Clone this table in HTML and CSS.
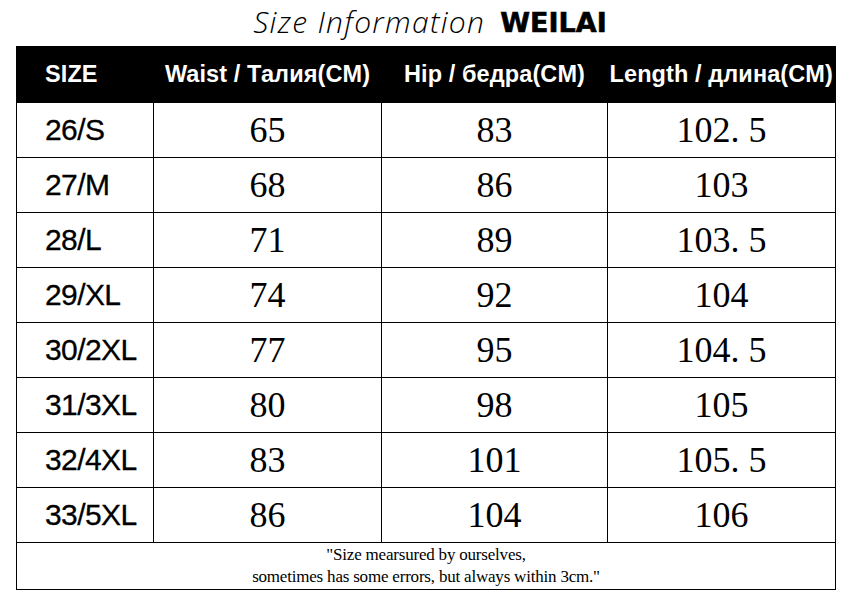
FILE: index.html
```html
<!DOCTYPE html>
<html lang="en">
<head>
<meta charset="utf-8">
<title>Size Information WEILAI</title>
<link rel="stylesheet" href="styles.css">
</head>
<body>
<div class="page">
  <h1 class="title"><span class="title-script">Size Information</span><span class="title-brand">WEILAI</span></h1>
  <table class="size-table">
    <colgroup>
      <col class="c-size"><col class="c-num"><col class="c-num2"><col class="c-num">
    </colgroup>
    <thead>
      <tr class="head-row">
        <th class="h-size">SIZE</th>
        <th>Waist / Талия(CM)</th>
        <th>Hip / бедра(CM)</th>
        <th>Length / длина(CM)</th>
      </tr>
    </thead>
    <tbody>
      <tr><td class="size">26/S</td><td class="num">65</td><td class="num">83</td><td class="num">102. 5</td></tr>
      <tr><td class="size">27/M</td><td class="num">68</td><td class="num">86</td><td class="num">103</td></tr>
      <tr><td class="size">28/L</td><td class="num">71</td><td class="num">89</td><td class="num">103. 5</td></tr>
      <tr><td class="size">29/XL</td><td class="num">74</td><td class="num">92</td><td class="num">104</td></tr>
      <tr><td class="size">30/2XL</td><td class="num">77</td><td class="num">95</td><td class="num">104. 5</td></tr>
      <tr><td class="size">31/3XL</td><td class="num">80</td><td class="num">98</td><td class="num">105</td></tr>
      <tr><td class="size">32/4XL</td><td class="num">83</td><td class="num">101</td><td class="num">105. 5</td></tr>
      <tr><td class="size">33/5XL</td><td class="num">86</td><td class="num">104</td><td class="num">106</td></tr>
      <tr class="note-row"><td class="note" colspan="4">"Size mearsured by ourselves,<br>sometimes has some errors, but always within 3cm."</td></tr>
    </tbody>
  </table>
</div>
</body>
</html>
```

FILE: styles.css
```css
html, body {
  margin: 0;
  padding: 0;
  background: #ffffff;
}

.page {
  width: 844px;
  height: 600px;
  overflow: hidden;
  color: #000;
}

.title {
  margin: 0;
  height: 46px;
  padding-bottom: 2px;
  display: flex;
  justify-content: center;
  align-items: center;
  gap: 15px;
  padding-left: 16px;
  box-sizing: border-box;
  font-weight: normal;
}

.title-script {
  font-family: "Open Sans", "DejaVu Sans", sans-serif;
  font-style: italic;
  font-weight: 300;
  font-size: 30px;
  letter-spacing: 1.3px;
  line-height: 1;
}

.title-brand {
  font-family: "DejaVu Sans", "Liberation Sans", sans-serif;
  font-weight: 900;
  font-size: 27px;
  line-height: 1;
  -webkit-text-stroke: 0.6px #000;
}

.size-table {
  margin-left: 16px;
  width: 820px;
  border-collapse: collapse;
  table-layout: fixed;
  border: 1.5px solid #000;
}

.c-size { width: 137px; }
.c-num { width: 228px; }
.c-num2 { width: 226px; }

.head-row {
  height: 56px;
  background: #000;
  color: #fff;
}

.head-row th {
  font-family: "Liberation Sans", Arial, sans-serif;
  font-weight: bold;
  font-size: 23.5px;
  letter-spacing: 0.1px;
  text-align: center;
  padding: 0;
  white-space: nowrap;
}

.head-row .h-size {
  text-align: left;
  padding-left: 28px;
}

tbody tr {
  height: 55px;
}

tbody td {
  border: 1.5px solid #000;
  padding: 0;
}

.size {
  font-family: "Liberation Sans", Arial, sans-serif;
  font-size: 30px;
  letter-spacing: -0.6px;
  padding-left: 28px;
  text-align: left;
  -webkit-text-stroke: 0.3px #000;
}

.num {
  font-family: "Liberation Serif", "Times New Roman", serif;
  font-size: 36px;
  text-align: center;
}

.note-row {
  height: 47px;
}

.note {
  font-family: "Liberation Serif", "Times New Roman", serif;
  font-size: 17px;
  line-height: 22px;
  text-align: center;
  letter-spacing: -0.2px;
}
```
